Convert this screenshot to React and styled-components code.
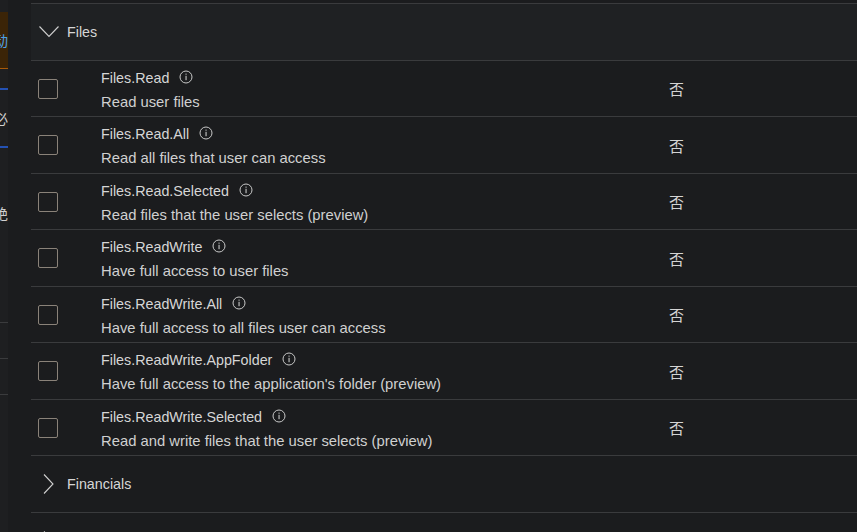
import React from "react";
import styled, { createGlobalStyle } from "styled-components";

const GlobalStyle = createGlobalStyle`
  html, body, #root {
    margin: 0;
    padding: 0;
    height: 100%;
    width: 100%;
  }
  body {
    background-color: #1b1c1e;
    font-family: "Liberation Sans", "Noto Sans CJK SC", sans-serif;
    color: #d6d6d6;
    overflow: hidden;
  }
`;

const Page = styled.div`
  display: flex;
  height: 532px;
  width: 857px;
  overflow: hidden;
`;

const Rail = styled.div`
  width: 8px;
  flex-shrink: 0;
  background-color: #1e1f21;
  display: flex;
  flex-direction: column;
  padding-top: 12px;
  overflow: hidden;
`;

const RailCell = styled.div`
  height: ${(p) => p.h}px;
  flex-shrink: 0;
  display: flex;
  align-items: center;
  justify-content: flex-end;
  overflow: hidden;
  font-family: "Noto Sans CJK SC", sans-serif;
  font-size: 14px;
  white-space: nowrap;
  color: ${(p) => p.color || "#d0d0d0"};
  background-color: ${(p) => p.bg || "transparent"};
  border-bottom: ${(p) => (p.line ? `${p.lineW || 1}px solid ${p.line}` : "none")};
  box-sizing: border-box;
`;

const Gutter = styled.div`
  width: 23px;
  flex-shrink: 0;
`;

const Main = styled.div`
  flex: 1;
  padding-top: 3px;
  min-width: 0;
`;

const GroupHeader = styled.div`
  display: flex;
  align-items: center;
  gap: 8px;
  height: ${(p) => (p.open ? 55.75 : 56)}px;
  padding-left: 8px;
  background-color: ${(p) => (p.open ? "#1f2123" : "transparent")};
  border-top: ${(p) => (p.open ? "1px solid #3a3b3d" : "none")};
  border-bottom: 1px solid #3a3b3d;
  font-size: 14.3px;
  color: #d6d6d6;
`;

const Row = styled.div`
  display: grid;
  grid-template-columns: 70px 568px 1fr;
  align-items: center;
  height: 55.5px;
  border-bottom: 1px solid #3a3b3d;
`;

const CheckCell = styled.div`
  padding-left: 7px;
  display: flex;
  align-items: center;
`;

const Checkbox = styled.span`
  display: block;
  width: 20px;
  height: 20px;
  box-sizing: border-box;
  border: 1px solid #8a8279;
  border-radius: 2px;
`;

const TextCell = styled.div`
  display: flex;
  flex-direction: column;
  margin-top: 2px;
`;

const Title = styled.div`
  display: flex;
  align-items: center;
  gap: 10px;
  height: 24px;
  font-size: 14.3px;
  color: #d6d6d6;
  white-space: nowrap;
`;

const Desc = styled.div`
  height: 24px;
  line-height: 24px;
  font-size: 14.8px;
  color: #d0d0d0;
  white-space: nowrap;
`;

const Status = styled.div`
  font-family: "Noto Sans CJK SC", sans-serif;
  font-size: 15px;
  color: #d4d4d4;
`;

const InfoIcon = () => (
  <svg width="14" height="14" viewBox="0 0 14 14" style={{ marginTop: -2 }}>
    <circle cx="7" cy="7" r="6" fill="none" stroke="#c8c8c8" strokeWidth="1" />
    <rect x="6.5" y="5.8" width="1.1" height="4.4" fill="#c8c8c8" />
    <rect x="6.5" y="3.6" width="1.1" height="1.1" fill="#c8c8c8" />
  </svg>
);

const ChevronDown = () => (
  <svg width="20" height="20" viewBox="0 0 20 20">
    <polyline points="0.5,4.5 10,14.5 19.5,4.5" fill="none" stroke="#cfcfcf" strokeWidth="1.1" />
  </svg>
);

const ChevronRight = () => (
  <svg width="20" height="20" viewBox="0 0 20 20">
    <polyline points="5,0.5 14,10 5,19.5" fill="none" stroke="#cfcfcf" strokeWidth="1.1" />
  </svg>
);

const permissions = [
  { name: "Files.Read", desc: "Read user files" },
  { name: "Files.Read.All", desc: "Read all files that user can access" },
  { name: "Files.Read.Selected", desc: "Read files that the user selects (preview)" },
  { name: "Files.ReadWrite", desc: "Have full access to user files" },
  { name: "Files.ReadWrite.All", desc: "Have full access to all files user can access" },
  { name: "Files.ReadWrite.AppFolder", desc: "Have full access to the application's folder (preview)" },
  { name: "Files.ReadWrite.Selected", desc: "Read and write files that the user selects (preview)" },
];

const PermissionRow = ({ name, desc }) => (
  <Row>
    <CheckCell>
      <Checkbox />
    </CheckCell>
    <TextCell>
      <Title>
        {name}
        <InfoIcon />
      </Title>
      <Desc>{desc}</Desc>
    </TextCell>
    <Status>否</Status>
  </Row>
);

export default function App() {
  return (
    <>
      <GlobalStyle />
      <Page>
        <Rail>
          <RailCell h={57} bg="#3b2407" line="#a85a08" color="#4ba0e6">
            调动
          </RailCell>
          <RailCell h={21} line="#2451b3" lineW={2} />
          <RailCell h={56}>不必</RailCell>
          <RailCell h={2} line="#2451b3" lineW={2} />
          <RailCell h={130}>拒绝</RailCell>
          <RailCell h={45} line="#3a3b3d" />
          <RailCell h={36} line="#3a3b3d" />
          <RailCell h={36} line="#3a3b3d" />
        </Rail>
        <Gutter />
        <Main>
          <GroupHeader open>
            <ChevronDown />
            Files
          </GroupHeader>
          {permissions.map((p) => (
            <PermissionRow key={p.name} {...p} />
          ))}
          <GroupHeader>
            <ChevronRight />
            Financials
          </GroupHeader>
          <GroupHeader>
            <ChevronRight />
            Group
          </GroupHeader>
        </Main>
      </Page>
    </>
  );
}
